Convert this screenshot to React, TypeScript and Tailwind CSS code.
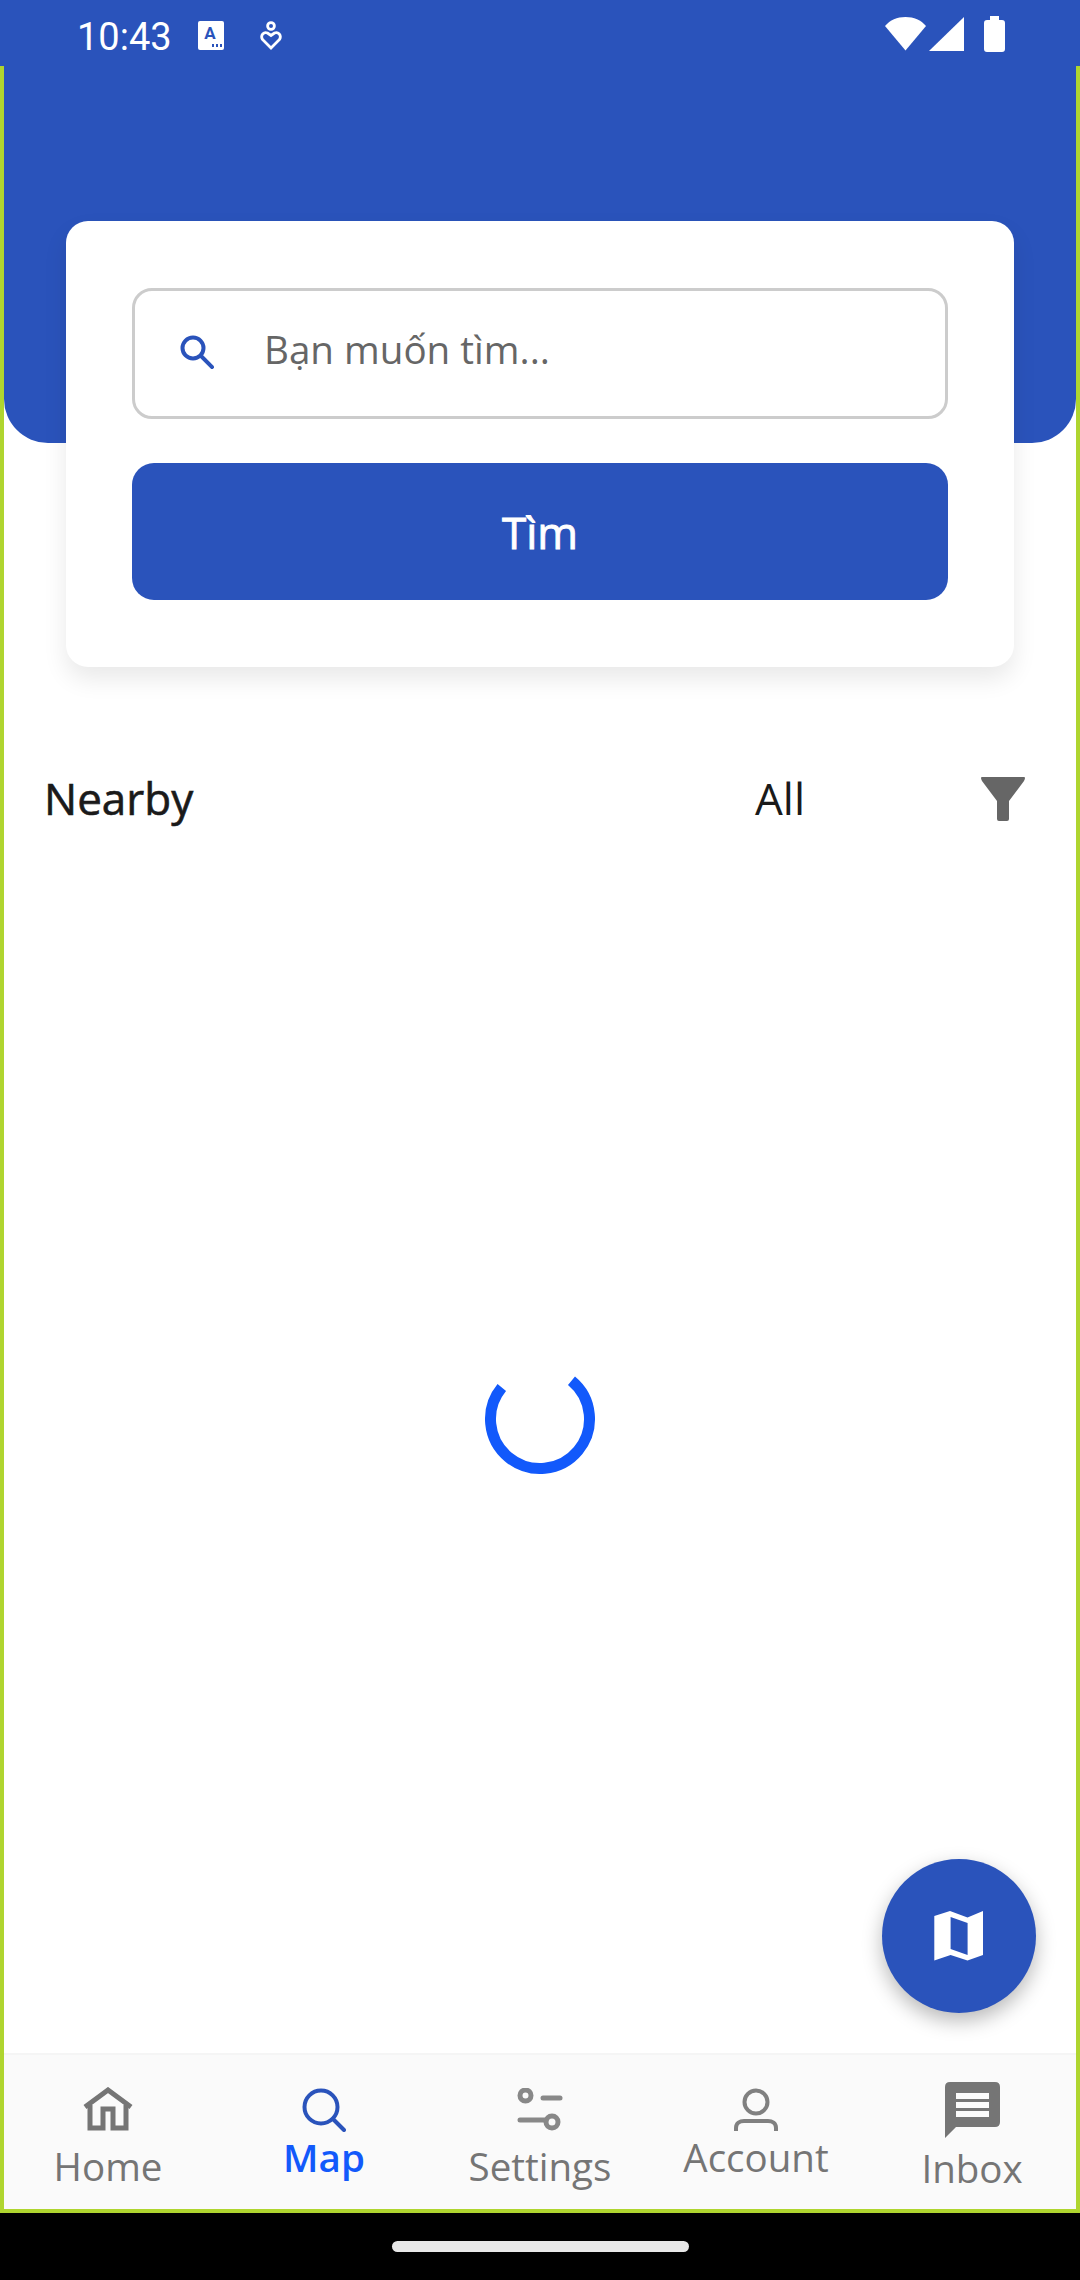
import React from "react";

const BLUE = "#2a53bb";

function TabItem({
  label,
  icon,
  labelClass,
}: {
  label: string;
  icon: React.ReactNode;
  labelClass: string;
}) {
  return (
    <div className="flex flex-col items-center">
      {icon}
      <span className={labelClass}>{label}</span>
    </div>
  );
}

export default function App() {
  return (
    <div className="w-[1080px] h-[2280px] flex flex-col bg-black overflow-hidden font-['Open_Sans',sans-serif]">
      {/* Status bar */}
      <div className="h-[66px] shrink-0 bg-[#2a53bb] flex items-center pl-[77px] pr-[75px] text-white">
        <span className="text-[38px] leading-none font-['Roboto',sans-serif] mt-[7px]">10:43</span>
        <svg width="26" height="29" viewBox="0 0 26 29" className="ml-[26px] mt-[4px]">
          <rect x="0" y="0" width="26" height="29" rx="2" fill="#fff" />
          <text x="12" y="18" fontSize="17" fontWeight="700" textAnchor="middle" fill={BLUE} fontFamily="Roboto, sans-serif">
            A
          </text>
          <rect x="14" y="23" width="2" height="3" fill={BLUE} />
          <rect x="18" y="23" width="2" height="3" fill={BLUE} />
          <rect x="22" y="23" width="2" height="3" fill={BLUE} />
        </svg>
        <svg width="22" height="30" viewBox="0 0 22 30" className="ml-[36px] mt-[6px]" fill="none" stroke="#fff" strokeWidth="2.8">
          <circle cx="11" cy="5" r="3.4" />
          <path d="M11 27 L2.5 18.5 C0 14 4 10.5 7.5 12 L11 14.5 L14.5 12 C18 10.5 22 14 19.5 18.5 Z" />
        </svg>
        <div className="flex-1" />
        <svg width="41" height="34" viewBox="0 0 41 34" className="mr-[3px] mt-[2px]">
          <path d="M20.5 33.5 L0 9 C5 3 12 0 20.5 0 C29 0 36 3 41 9 Z" fill="#fff" />
        </svg>
        <svg width="35" height="34" viewBox="0 0 35 34" className="mt-[2px]">
          <path d="M35 0 V34 H0 Z" fill="#fff" />
        </svg>
        <svg width="21" height="36" viewBox="0 0 21 36" className="ml-[20px] mt-[2px]">
          <path d="M6 0 H15 V4 H18 Q21 4 21 7 V33 Q21 36 18 36 H3 Q0 36 0 33 V7 Q0 4 3 4 H6 Z" fill="#fff" />
        </svg>
      </div>

      {/* Screen with the green outline */}
      <div className="relative h-[2147px] shrink-0 bg-white border-x-[4px] border-b-[4px] border-[#afd52f] flex flex-col">
        <div className="h-[377px] shrink-0 bg-[#2a53bb] rounded-b-[44px]" />

        {/* Search card */}
        <div className="-mt-[222px] mx-[62px] h-[446px] shrink-0 bg-white rounded-[22px] shadow-[0_12px_24px_rgba(0,0,0,0.09)] px-[66px] pt-[67px] flex flex-col">
          <div className="h-[131px] shrink-0 border-[3px] border-[#cccccc] rounded-[20px] flex items-center pl-[45px]">
            <svg width="34" height="34" viewBox="0 0 34 34" className="mt-[-4px]" fill="none" stroke={BLUE} strokeWidth="4">
              <circle cx="13" cy="13" r="10.5" />
              <path d="M21 21 L32 32" strokeLinecap="square" />
            </svg>
            <span className="ml-[50px] text-[38.6px] leading-none text-[#666666] mt-[-9px]">Bạn muốn tìm...</span>
          </div>
          <div className="mt-[44px] h-[137px] shrink-0 bg-[#2a53bb] rounded-[22px] flex items-center justify-center">
            <span className="text-[44px] leading-none text-white [-webkit-text-stroke:0.9px_#ffffff]">Tìm</span>
          </div>
        </div>

        {/* Nearby row */}
        <div className="mt-[100px] h-[64px] shrink-0 flex items-center pl-[40px] pr-[51px]">
          <span className="text-[44px] leading-none text-[#1a1a1a] mt-[-3px] [-webkit-text-stroke:0.6px_#1a1a1a]">Nearby</span>
          <div className="flex-1" />
          <span className="text-[44px] leading-none text-[#1a1a1a] mt-[-3px]">All</span>
          <svg width="44" height="44" viewBox="0 0 44 44" className="ml-[176px]">
            <path d="M1 0 H43 Q45 0 43 4 L28 24 V42 Q28 44 26 44 H18 Q16 44 16 42 V24 L1 4 Q-1 0 1 0 Z" fill="#666666" />
          </svg>
        </div>

        {/* Loading spinner */}
        <div className="flex-1 flex items-start justify-center pt-[528px]">
          <svg width="120" height="120" viewBox="0 0 120 120" fill="none">
            <path d="M21.8 28.5 A49.5 49.5 0 1 0 91.5 21.8" stroke="#1259fb" strokeWidth="11" />
          </svg>
        </div>

        {/* Map floating button */}
        <div className="absolute left-[878px] top-[1793px] w-[154px] h-[154px] rounded-full bg-[#2a53bb] shadow-[0_8px_20px_rgba(0,0,0,0.28)] flex items-center justify-center">
          <svg width="50" height="50" viewBox="0 0 50 50">
            <path
              fillRule="evenodd"
              d="M0.3 5 L16 0 L33.5 6.5 L49 0 V44 L33.5 49.6 L16.6 44 L0.3 49.6 Z M16.6 6 V38 L33.6 44 V12 Z"
              fill="#fff"
            />
          </svg>
        </div>

        {/* Bottom tabs */}
        <div className="h-[156px] shrink-0 bg-[#fafafa] border-t-[2px] border-[#f5f5f5] pt-[2px] text-[#757575]">
          <div className="-mx-[4px] grid grid-cols-5">
            <TabItem
              label="Home"
              labelClass="text-[38.5px] leading-none mt-[16px]"
              icon={
                <svg width="50" height="44" viewBox="0 0 50 44" className="mt-[30px]" fill="none" stroke="#757575" strokeWidth="5">
                  <path d="M7 18 V41 H20 V22 H30 V41 H43 V18" />
                  <path d="M2 20 L25 3 L48 20" />
                </svg>
              }
            />
            <TabItem
              label="Map"
              labelClass="text-[38.5px] leading-none font-semibold text-[#1259fb] mt-[6px]"
              icon={
                <svg width="44" height="44" viewBox="0 0 44 44" className="mt-[31px]" fill="none" stroke={BLUE} strokeWidth="4">
                  <circle cx="19" cy="19" r="16.5" />
                  <path d="M31 31 L42 42" strokeLinecap="round" />
                </svg>
              }
            />
            <TabItem
              label="Settings"
              labelClass="text-[38.5px] leading-none mt-[15px]"
              icon={
                <svg width="46" height="44" viewBox="0 0 46 44" className="mt-[31px]" fill="none" stroke="#888888" strokeWidth="5">
                  <circle cx="8.5" cy="7.5" r="5.5" />
                  <path d="M3 32 H29" strokeLinecap="round" />
                  <path d="M26 10 H43" strokeLinecap="round" />
                  <circle cx="35" cy="34" r="6" />
                </svg>
              }
            />
            <TabItem
              label="Account"
              labelClass="text-[38.5px] leading-none mt-[6px]"
              icon={
                <svg width="44" height="44" viewBox="0 0 44 44" className="mt-[31px]" fill="none" stroke="#808080" strokeWidth="4">
                  <circle cx="22" cy="14" r="11.5" />
                  <path d="M2 43 V40 C2 35 6 33 10 33 H34 C38 33 42 35 42 40 V43" />
                </svg>
              }
            />
            <TabItem
              label="Inbox"
              labelClass="text-[38.5px] leading-none mt-[11px]"
              icon={
                <svg width="55" height="56" viewBox="0 0 55 56" className="mt-[25px]">
                  <path
                    fillRule="evenodd"
                    d="M5 0 H50 Q55 0 55 5 V40 Q55 45 50 45 H11 L0 56 V5 Q0 0 5 0 Z M11 11 V17 H44 V11 Z M11 20 V26 H44 V20 Z M11 29 V35 H44 V29 Z"
                    fill="#757575"
                  />
                </svg>
              }
            />
          </div>
        </div>
      </div>

      {/* Android nav bar */}
      <div className="flex-1 flex justify-center pt-[28px]">
        <div className="w-[297px] h-[11px] rounded-full bg-[#e8e8e8]" />
      </div>
    </div>
  );
}
